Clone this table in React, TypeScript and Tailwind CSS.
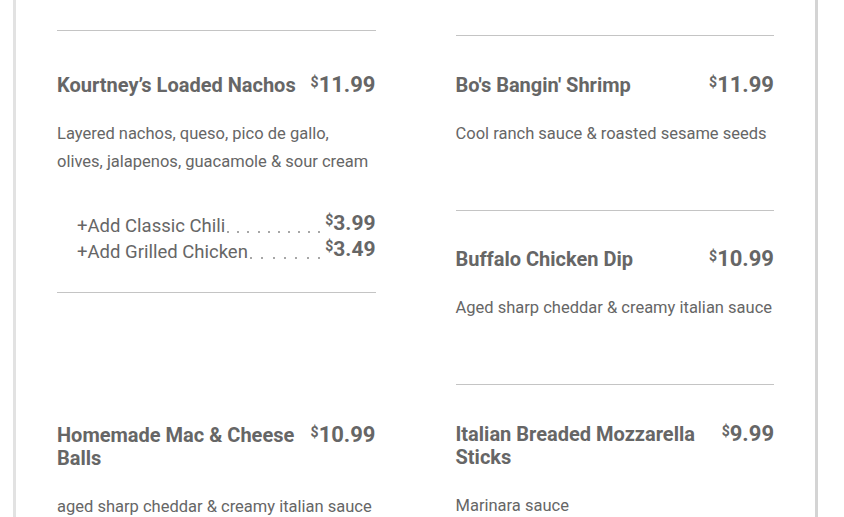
import React from 'react';

interface Addon {
  label: string;
  price: string;
  dots: number;
}

interface MenuItem {
  name: string;
  price: string;
  desc: string;
  addons?: Addon[];
}

const font = { fontFamily: 'Roboto, "Noto Sans", sans-serif' };

const Price: React.FC<{ value: string; big?: boolean }> = ({ value, big = true }) => (
  <div className="flex shrink-0 items-start font-bold text-[#666]">
    <span className="mt-[1px] text-[14px] leading-[16px]">$</span>
    <span className={big ? 'text-[22px] leading-[23px]' : 'text-[21px] leading-[24px]'}>{value}</span>
  </div>
);

// dotted leader between the add-on label and its price
const Leader: React.FC<{ count: number }> = ({ count }) => (
  <div className="flex min-w-0 flex-1 items-end justify-between pb-[6px] pl-[2px] pr-[5px]">
    {Array.from({ length: count }).map((_, i) => (
      <span key={i} className="h-[2px] w-[2px] rounded-full bg-[#8a8a8a]" />
    ))}
  </div>
);

const ItemBlock: React.FC<{ item: MenuItem }> = ({ item }) => (
  <div>
    <div className="flex items-start justify-between gap-[12px]">
      <h3 className="pt-[1px] text-[20px] font-bold leading-[23px] text-[#666]">{item.name}</h3>
      <Price value={item.price} />
    </div>
    <p className="mt-[23px] text-[16.5px] leading-[28px] text-[#666]">{item.desc}</p>
    {item.addons && (
      <div className="mt-[37px] pl-[20px]">
        {item.addons.map((a) => (
          <div key={a.label} className="flex items-stretch text-[18.5px] leading-[26px] text-[#666]">
            <span className="shrink-0">+{a.label}</span>
            <Leader count={a.dots} />
            <div className="-mt-[2px]">
              <Price value={a.price} big={false} />
            </div>
          </div>
        ))}
      </div>
    )}
  </div>
);

const Rule: React.FC<{ className?: string }> = ({ className = '' }) => (
  <div className={`h-px bg-[#c4c4c4] ${className}`} />
);

const nachos: MenuItem = {
  name: 'Kourtney’s Loaded Nachos',
  price: '11.99',
  desc: 'Layered nachos, queso, pico de gallo, olives, jalapenos, guacamole & sour cream',
  addons: [
    { label: 'Add Classic Chili', price: '3.99', dots: 10 },
    { label: 'Add Grilled Chicken', price: '3.49', dots: 7 },
  ],
};

const macBalls: MenuItem = {
  name: 'Homemade Mac & Cheese Balls',
  price: '10.99',
  desc: 'aged sharp cheddar & creamy italian sauce',
};

const shrimp: MenuItem = {
  name: "Bo's Bangin' Shrimp",
  price: '11.99',
  desc: 'Cool ranch sauce & roasted sesame seeds',
};

const dip: MenuItem = {
  name: 'Buffalo Chicken Dip',
  price: '10.99',
  desc: 'Aged sharp cheddar & creamy italian sauce',
};

const mozz: MenuItem = {
  name: 'Italian Breaded Mozzarella Sticks',
  price: '9.99',
  desc: 'Marinara sauce',
};

export default function App() {
  return (
    <div className="h-[517px] w-full overflow-hidden bg-white" style={font}>
      <div className="ml-[13px] h-full w-[805px] border-x-[3px] border-l-[#e2e2e2] border-r-[#d4d4d4] px-[41px]">
        <div className="grid grid-cols-2 gap-x-[80px]">
          {/* left column */}
          <div className="flex flex-col">
            <Rule className="mt-[30px]" />
            <div className="mt-[42px]">
              <ItemBlock item={nachos} />
            </div>
            <Rule className="mt-[27px]" />
            <div className="mt-[130px]">
              <ItemBlock item={macBalls} />
            </div>
          </div>

          {/* right column */}
          <div className="flex flex-col">
            <Rule className="mt-[35px]" />
            <div className="mt-[37px]">
              <ItemBlock item={shrimp} />
            </div>
            <Rule className="mt-[62px]" />
            <div className="mt-[36px]">
              <ItemBlock item={dip} />
            </div>
            <Rule className="mt-[62px]" />
            <div className="mt-[37px]">
              <ItemBlock item={mozz} />
            </div>
          </div>
        </div>
      </div>
    </div>
  );
}
